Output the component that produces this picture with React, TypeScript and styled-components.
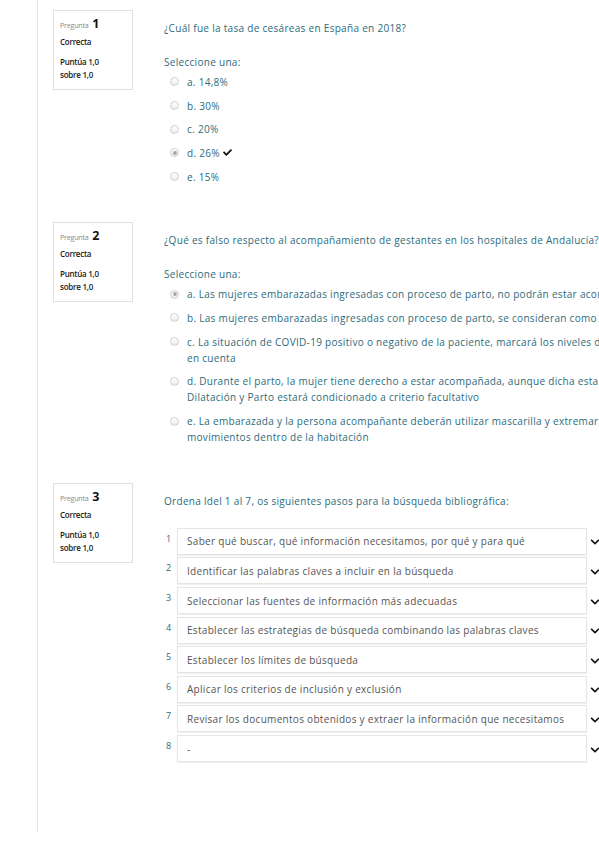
import React from "react";
import styled, { createGlobalStyle } from "styled-components";
import { FaCheck, FaChevronDown } from "react-icons/fa";

const GlobalStyle = createGlobalStyle`
  html, body { margin: 0; padding: 0; background: #fff; overflow: hidden; }
  body { font-family: "Open Sans", "Liberation Sans", sans-serif; }
`;

const Page = styled.div`
  width: 599px;
  overflow: hidden;
`;

const Main = styled.div`
  margin-left: 37px;
  border-left: 1px solid #e4e4e4;
  padding: 10px 0 71px 15px;
  width: 900px;
`;

const Question = styled.div`
  display: flex;
  align-items: flex-start;
  margin-bottom: 34px;
  &:last-child { margin-bottom: 0; }
`;

const InfoBox = styled.div`
  width: 80px;
  height: 80px;
  box-sizing: border-box;
  border: 1px solid #dde1e4;
  padding: 6px 6px;
  flex-shrink: 0;
  color: #1a1a1a;
  font-size: 8px;
  letter-spacing: -0.25px;
`;

const QNo = styled.div`
  line-height: 14px;
  color: #8a8a8a;
  font-size: 7.2px;
  b {
    color: #111;
    font-size: 12.5px;
    font-weight: 700;
    margin-left: 2px;
    letter-spacing: 0;
  }
`;

const State = styled.div`
  margin-top: 5px;
  line-height: 10px;
  font-weight: 600;
`;

const Grade = styled.div`
  margin-top: 8px;
  line-height: 13px;
  font-weight: 600;
`;

const Content = styled.div`
  margin-left: 31px;
  padding-top: 10px;
  color: #2c6b7c;
  font-size: 10px;
  letter-spacing: 0.3px;
  flex: 1;
`;

const QText = styled.div`
  line-height: 16px;
`;

const Prompt = styled.div`
  margin-top: 18px;
  line-height: 16px;
`;

const Options = styled.div`
  display: flex;
  flex-direction: column;
`;

const Option = styled.div`
  display: flex;
  align-items: flex-start;
  padding: 3.85px 0 3.85px 6px;
  line-height: 16px;
  white-space: nowrap;
`;

const Radio = styled.span<{ $checked?: boolean }>`
  width: 9px;
  height: 9px;
  box-sizing: border-box;
  border-radius: 50%;
  border: 1px solid #cfcfcf;
  background: linear-gradient(#ffffff, #ececec);
  margin-top: 3.5px;
  margin-right: 8px;
  flex-shrink: 0;
  position: relative;
  &::after {
    content: "";
    display: ${(p) => (p.$checked ? "block" : "none")};
    position: absolute;
    left: 1.5px;
    top: 1.5px;
    width: 4px;
    height: 4px;
    border-radius: 50%;
    background: #a9a9a9;
  }
`;

const Label = styled.span`
  display: inline-flex;
  align-items: center;
  gap: 3px;
  svg { color: #111; font-size: 9px; }
`;

const OrderList = styled.div`
  margin-top: 19px;
  display: flex;
  flex-direction: column;
  gap: 2.6px;
`;

const OrderRow = styled.div`
  display: flex;
  align-items: flex-start;
`;

const RowNum = styled.span`
  width: 13px;
  padding-left: 2px;
  box-sizing: border-box;
  line-height: 22px;
  font-size: 9px;
  letter-spacing: 0;
  color: #2c6b7c;
`;

const SelectBox = styled.div`
  width: 410px;
  height: 27px;
  box-sizing: border-box;
  border: 1px solid #e5e5e5;
  box-shadow: 0 1px 1px rgba(0, 0, 0, 0.06);
  background: #fff;
  padding-left: 9px;
  display: flex;
  align-items: center;
  color: #555;
  font-size: 10px;
  letter-spacing: 0.3px;
  white-space: nowrap;
`;

const Chevron = styled.span`
  margin-left: 3px;
  height: 27px;
  padding-top: 2px;
  box-sizing: border-box;
  display: flex;
  align-items: center;
  color: #111;
  font-size: 10px;
`;

const q1Options = ["a. 14,8%", "b. 30%", "c. 20%", "d. 26%", "e. 15%"];

const q2Options: { text: React.ReactNode; checked?: boolean }[] = [
  { text: "a. Las mujeres embarazadas ingresadas con proceso de parto, no podrán estar acompañadas", checked: true },
  { text: "b. Las mujeres embarazadas ingresadas con proceso de parto, se consideran como pacientes de riesgo" },
  {
    text: (
      <>
        c. La situación de COVID-19 positivo o negativo de la paciente, marcará los niveles de protección a tener
        <br />
        en cuenta
      </>
    ),
  },
  {
    text: (
      <>
        d. Durante el parto, la mujer tiene derecho a estar acompañada, aunque dicha estancia en la Unidad de
        <br />
        Dilatación y Parto estará condicionado a criterio facultativo
      </>
    ),
  },
  {
    text: (
      <>
        e. La embarazada y la persona acompañante deberán utilizar mascarilla y extremar las medidas de higiene y limitar los
        <br />
        movimientos dentro de la habitación
      </>
    ),
  },
];

const q3Rows = [
  "Saber qué buscar, qué información necesitamos, por qué y para qué",
  "Identificar las palabras claves a incluir en la búsqueda",
  "Seleccionar las fuentes de información más adecuadas",
  "Establecer las estrategias de búsqueda combinando las palabras claves",
  "Establecer los límites de búsqueda",
  "Aplicar los criterios de inclusión y exclusión",
  "Revisar los documentos obtenidos y extraer la información que necesitamos",
  "-",
];

const Info = ({ n }: { n: number }) => (
  <InfoBox>
    <QNo>
      Pregunta <b>{n}</b>
    </QNo>
    <State>Correcta</State>
    <Grade>
      Puntúa 1,0
      <br />
      sobre 1,0
    </Grade>
  </InfoBox>
);

export default function App() {
  return (
    <Page>
      <GlobalStyle />
      <Main>
        <Question>
          <Info n={1} />
          <Content>
            <QText>¿Cuál fue la tasa de cesáreas en España en 2018?</QText>
            <Prompt>Seleccione una:</Prompt>
            <Options>
              {q1Options.map((o, i) => (
                <Option key={o}>
                  <Radio $checked={i === 3} />
                  <Label>
                    {o}
                    {i === 3 && <FaCheck />}
                  </Label>
                </Option>
              ))}
            </Options>
          </Content>
        </Question>

        <Question>
          <Info n={2} />
          <Content>
            <QText>¿Qué es falso respecto al acompañamiento de gestantes en los hospitales de Andalucía?</QText>
            <Prompt>Seleccione una:</Prompt>
            <Options>
              {q2Options.map((o, i) => (
                <Option key={i}>
                  <Radio $checked={o.checked} />
                  <span>{o.text}</span>
                </Option>
              ))}
            </Options>
          </Content>
        </Question>

        <Question>
          <Info n={3} />
          <Content>
            <QText>Ordena ldel 1 al 7, os siguientes pasos para la búsqueda bibliográfica:</QText>
            <OrderList>
              {q3Rows.map((r, i) => (
                <OrderRow key={i}>
                  <RowNum>{i + 1}</RowNum>
                  <SelectBox>{r}</SelectBox>
                  <Chevron>
                    <FaChevronDown />
                  </Chevron>
                </OrderRow>
              ))}
            </OrderList>
          </Content>
        </Question>
      </Main>
    </Page>
  );
}
